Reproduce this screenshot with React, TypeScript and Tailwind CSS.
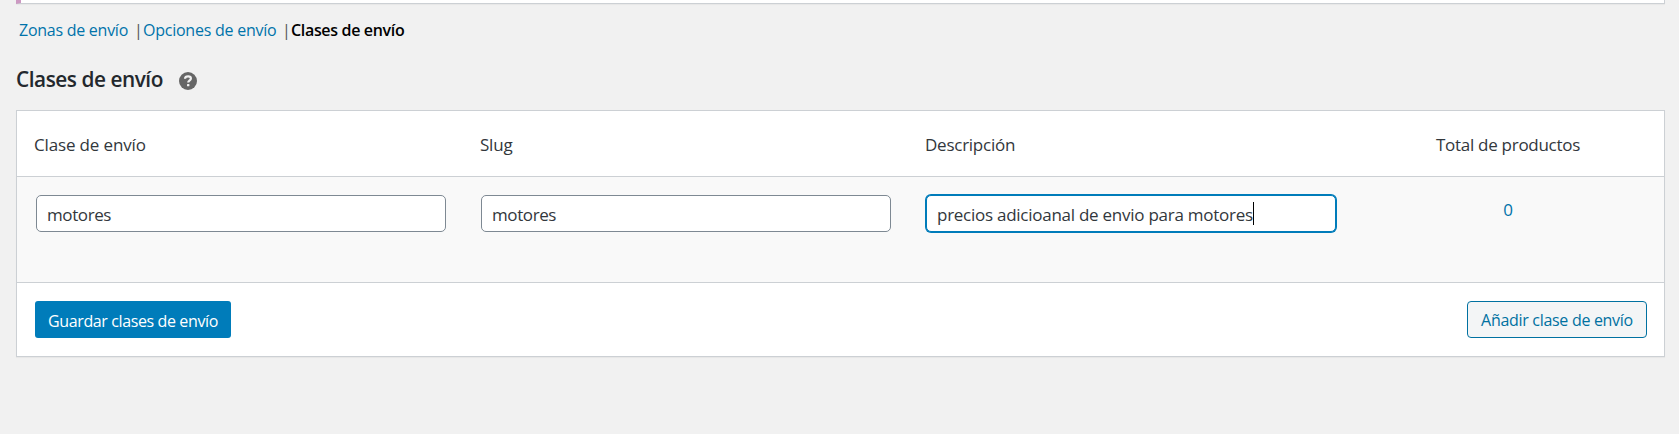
import { clsx } from "clsx";

const columns = [
  { label: "Clase de envío", className: "-ml-px tracking-[-0.15px]" },
  { label: "Slug", className: "tracking-[-0.2px]" },
  { label: "Descripción", className: "tracking-[-0.25px]" },
];

const fields = [
  { value: "motores", focused: false },
  { value: "motores", focused: false },
  { value: "precios adicioanal de envio para motores", focused: true },
];

const HelpTip = () => (
  <svg className="mt-[4px] ml-[17px] size-[18px]" viewBox="0 0 18 18">
    <circle cx="9" cy="9" r="9" fill="#666" />
    <path d="M6 6.700C6.100 5 7.300 4.300 9.100 4.300c1.700 0 2.800.8 2.800 2.100 0 1.900-2.700 1.900-2.700 4.200" fill="none" stroke="#f1f1f1" strokeWidth="2.200" />
    <rect x="8" y="11.900" width="2.400" height="2.300" rx=".5" fill="#f1f1f1" />
  </svg>
);

const Field = ({ value, focused }: { value: string; focused: boolean }) => (
  <div className="h-full pt-[18px] pl-[19px]">
    <div
      className={clsx(
        "flex h-[37px] w-[410px] items-center rounded-[5px] border bg-white pl-[10px]",
        focused ? "border-[#007cba] ring-1 ring-[#007cba]" : "border-[#7e8993]"
      )}
    >
      <span className={clsx("pt-[3px] whitespace-nowrap", focused ? "tracking-[-0.26px]" : "tracking-[-0.4px]")}>{value}</span>
      {focused && <span className="h-[23px] w-px bg-black" />}
    </div>
  </div>
);

export default function App() {
  return <div className="h-[434px] overflow-hidden bg-[#f1f1f1] pr-[14px] pl-4 font-['Open_Sans',sans-serif] text-[17px] text-[#32373c]">
    <div className="h-1 border-r border-b border-l-[5px] border-r-[#ccd0d4] border-b-[#ccd0d4] border-l-[#cc99c2] bg-white shadow-[0_1px_1px_rgba(0,0,0,0.04)]" />

    <nav className="mt-[14px] flex h-6 items-center pl-[3px] text-[16px] leading-6 whitespace-nowrap text-[#0073aa]">
      <a className="w-[115px] tracking-[-0.26px]">Zonas de envío</a>
      <span className="w-[9px] text-[#555]">|</span>
      <a className="w-[139px] tracking-[-0.24px]">Opciones de envío</a>
      <span className="w-[9px] text-[#555]">|</span>
      <a className="font-semibold tracking-[-0.33px] text-black">Clases de envío</a>
    </nav>

    <div className="mt-[22px] flex h-[30px] items-center">
      <h2 className="w-[146px] text-[20.8px] leading-[30px] font-semibold tracking-[-0.46px] whitespace-nowrap text-[#23282d]">Clases de envío</h2>
      <HelpTip />
    </div>

    <div className="mt-[16px] h-[247px] border border-[#ccd0d4] bg-white shadow-[0_1px_1px_rgba(0,0,0,0.04)]">
      <div className="grid h-[66px] grid-cols-[445px_445px_445px_1fr] items-center border-b border-[#ccd0d4] pt-[3px]">
        {columns.map((c) => <div key={c.label} className="pl-[18px]"><span className={c.className}>{c.label}</span></div>)}
        <div className="text-center"><span className="tracking-[-0.28px]">Total de productos</span></div>
      </div>
      <div className="grid h-[106px] grid-cols-[445px_445px_445px_1fr] border-b border-[#ccd0d4] bg-[#f9f9f9]">
        {fields.map((f, i) => <Field key={i} {...f} />)}
        <a className="pt-5 text-center leading-[26px] text-[#0073aa]">0</a>
      </div>
      <div className="flex justify-between pt-[18px] pr-[17px] pl-[18px] text-[16px]">
        <button className="h-[37px] w-[196px] rounded-[3px] bg-[#007cba] pt-[2px] tracking-[-0.38px] whitespace-nowrap text-white">Guardar clases de envío</button>
        <button className="h-[37px] w-[180px] rounded-[4px] border border-[#0071a1] bg-[#f3f5f6] tracking-[-0.3px] whitespace-nowrap text-[#0071a1]">Añadir clase de envío</button>
      </div>
    </div>
  </div>
}
